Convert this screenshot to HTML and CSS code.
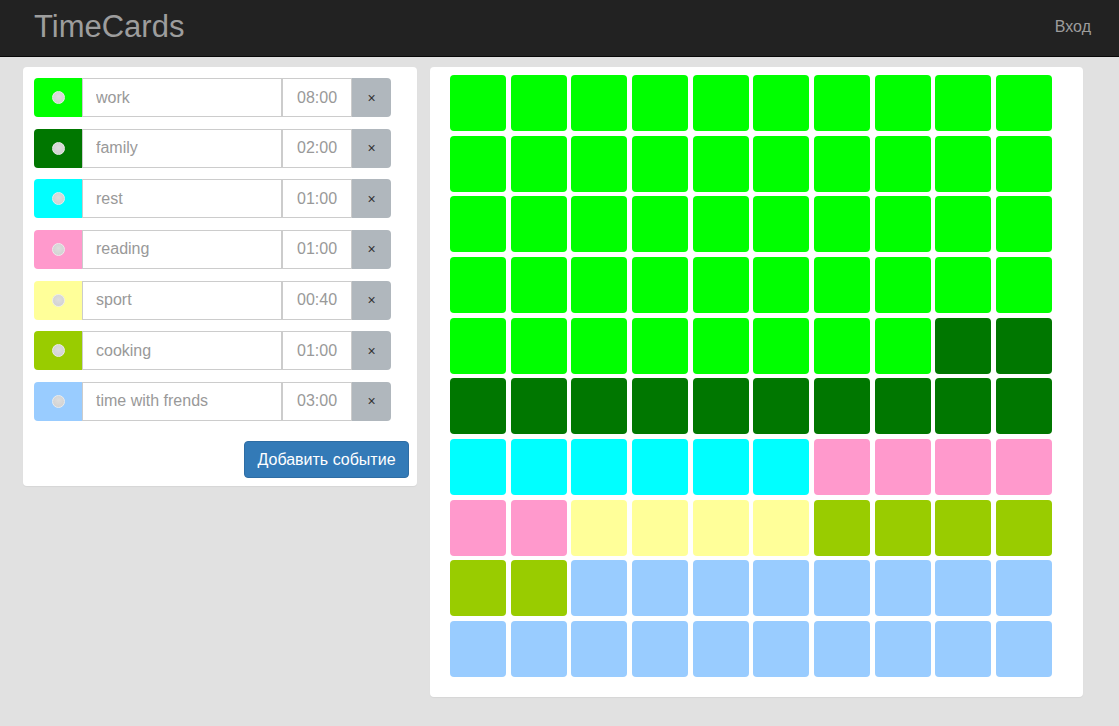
FILE: index.html
```html
<!DOCTYPE html>
<html lang="ru">
<head>
<meta charset="utf-8">
<title>TimeCards</title>
<link rel="stylesheet" href="styles.css">
</head>
<body>
<nav class="navbar">
  <a class="brand">TimeCards</a>
  <a class="login">Вход</a>
</nav>
<main class="main">
  <section class="panel events">
    <div class="rows">
      <div class="row"><span class="swatch c1"><i class="radio"></i></span><input class="name" value="work"><input class="time" value="08:00"><button class="del">×</button></div>
      <div class="row"><span class="swatch c2"><i class="radio"></i></span><input class="name" value="family"><input class="time" value="02:00"><button class="del">×</button></div>
      <div class="row"><span class="swatch c3"><i class="radio"></i></span><input class="name" value="rest"><input class="time" value="01:00"><button class="del">×</button></div>
      <div class="row"><span class="swatch c4"><i class="radio"></i></span><input class="name" value="reading"><input class="time" value="01:00"><button class="del">×</button></div>
      <div class="row"><span class="swatch c5"><i class="radio"></i></span><input class="name" value="sport"><input class="time" value="00:40"><button class="del">×</button></div>
      <div class="row"><span class="swatch c6"><i class="radio"></i></span><input class="name" value="cooking"><input class="time" value="01:00"><button class="del">×</button></div>
      <div class="row"><span class="swatch c7"><i class="radio"></i></span><input class="name" value="time with frends"><input class="time" value="03:00"><button class="del">×</button></div>
    </div>
    <div class="actions"><button class="add">Добавить событие</button></div>
  </section>
  <section class="panel board">
    <div class="grid">
      <div class="cell c1"></div><div class="cell c1"></div><div class="cell c1"></div><div class="cell c1"></div><div class="cell c1"></div><div class="cell c1"></div><div class="cell c1"></div><div class="cell c1"></div><div class="cell c1"></div><div class="cell c1"></div>
      <div class="cell c1"></div><div class="cell c1"></div><div class="cell c1"></div><div class="cell c1"></div><div class="cell c1"></div><div class="cell c1"></div><div class="cell c1"></div><div class="cell c1"></div><div class="cell c1"></div><div class="cell c1"></div>
      <div class="cell c1"></div><div class="cell c1"></div><div class="cell c1"></div><div class="cell c1"></div><div class="cell c1"></div><div class="cell c1"></div><div class="cell c1"></div><div class="cell c1"></div><div class="cell c1"></div><div class="cell c1"></div>
      <div class="cell c1"></div><div class="cell c1"></div><div class="cell c1"></div><div class="cell c1"></div><div class="cell c1"></div><div class="cell c1"></div><div class="cell c1"></div><div class="cell c1"></div><div class="cell c1"></div><div class="cell c1"></div>
      <div class="cell c1"></div><div class="cell c1"></div><div class="cell c1"></div><div class="cell c1"></div><div class="cell c1"></div><div class="cell c1"></div><div class="cell c1"></div><div class="cell c1"></div><div class="cell c2"></div><div class="cell c2"></div>
      <div class="cell c2"></div><div class="cell c2"></div><div class="cell c2"></div><div class="cell c2"></div><div class="cell c2"></div><div class="cell c2"></div><div class="cell c2"></div><div class="cell c2"></div><div class="cell c2"></div><div class="cell c2"></div>
      <div class="cell c3"></div><div class="cell c3"></div><div class="cell c3"></div><div class="cell c3"></div><div class="cell c3"></div><div class="cell c3"></div><div class="cell c4"></div><div class="cell c4"></div><div class="cell c4"></div><div class="cell c4"></div>
      <div class="cell c4"></div><div class="cell c4"></div><div class="cell c5"></div><div class="cell c5"></div><div class="cell c5"></div><div class="cell c5"></div><div class="cell c6"></div><div class="cell c6"></div><div class="cell c6"></div><div class="cell c6"></div>
      <div class="cell c6"></div><div class="cell c6"></div><div class="cell c7"></div><div class="cell c7"></div><div class="cell c7"></div><div class="cell c7"></div><div class="cell c7"></div><div class="cell c7"></div><div class="cell c7"></div><div class="cell c7"></div>
      <div class="cell c7"></div><div class="cell c7"></div><div class="cell c7"></div><div class="cell c7"></div><div class="cell c7"></div><div class="cell c7"></div><div class="cell c7"></div><div class="cell c7"></div><div class="cell c7"></div><div class="cell c7"></div>
    </div>
  </section>
</main>
</body>
</html>
```

FILE: styles.css
```css
* { box-sizing: border-box; }
html, body { margin: 0; padding: 0; }
body {
  background: #e1e1e1;
  font-family: "Liberation Sans", Arial, sans-serif;
  font-size: 16px;
  color: #333;
  height: 726px;
  overflow: hidden;
}

.navbar {
  height: 57px;
  background: #222;
  border-bottom: 1px solid #080808;
  display: flex;
  align-items: flex-start;
  justify-content: space-between;
  padding: 0 28px 0 34px;
}
.brand {
  color: #9d9d9d;
  font-size: 31px;
  line-height: 31px;
  padding-top: 11px;
}
.login {
  color: #9d9d9d;
  font-size: 16px;
  line-height: 18px;
  padding-top: 18px;
}

.main {
  display: flex;
  align-items: flex-start;
  gap: 13px;
  padding: 10px 0 0 23px;
}

.panel {
  background: #fff;
  border-radius: 4px;
  box-shadow: 0 1px 1px rgba(0,0,0,0.05);
}

.events {
  width: 394px;
  padding: 11px 8px 8px 11px;
}
.rows {
  display: flex;
  flex-direction: column;
  gap: 11.67px;
}
.row {
  display: flex;
  width: 357px;
  height: 39px;
}
.swatch {
  width: 48px;
  flex: none;
  border-radius: 4px 0 0 4px;
  display: flex;
  align-items: center;
  justify-content: center;
}
.radio {
  display: block;
  width: 13px;
  height: 13px;
  border-radius: 50%;
  background: radial-gradient(circle at 50% 40%, #dedede 0, #cfcfcf 100%);
  border: 1px solid #ececec;
}
.row input {
  font-family: "Liberation Sans", Arial, sans-serif;
  font-size: 16px;
  color: #999;
  border: 1px solid #ccc;
  background: #fff;
  height: 39px;
  margin: 0;
  outline: none;
  flex: none;
}
.name {
  width: 200px;
  padding: 0 12px 0 13px;
}
.time {
  width: 70px;
  padding: 0 0 0 14px;
}
.del {
  width: 39px;
  flex: none;
  border: none;
  background: #b0b7bd;
  border-radius: 0 4px 4px 0;
  color: #333;
  font-family: "Liberation Sans", Arial, sans-serif;
  font-size: 14px;
  padding: 0;
}

.actions {
  display: flex;
  justify-content: flex-end;
  margin-top: 20px;
}
.add {
  background: #337ab7;
  border: 1px solid #2e6da4;
  border-radius: 4px;
  color: #fff;
  font-family: "Liberation Sans", Arial, sans-serif;
  font-size: 16px;
  line-height: 21px;
  height: 37px;
  width: 165px;
  padding: 0;
}

.board {
  width: 653px;
  padding: 8px 20px 20px 20px;
}
.grid {
  display: grid;
  grid-template-columns: repeat(10, 56px);
  grid-auto-rows: 56px;
  gap: 4.67px;
}
.cell { border-radius: 4px; }

.c1 { background: #00ff00; }
.c2 { background: #007700; }
.c3 { background: #00ffff; }
.c4 { background: #ff99cc; }
.c5 { background: #ffff99; }
.c6 { background: #99cc00; }
.c7 { background: #99ccff; }
```
